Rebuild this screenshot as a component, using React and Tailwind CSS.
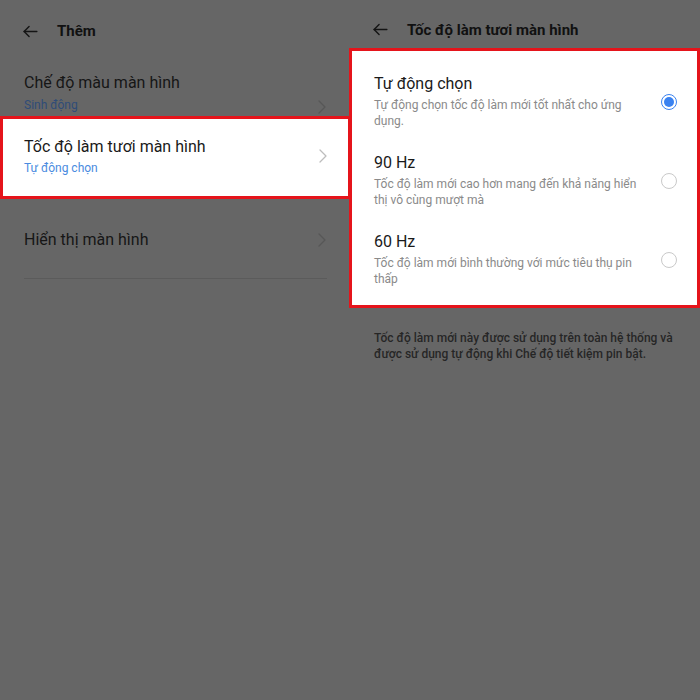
import React from 'react';

const font = { fontFamily: 'Roboto, "Noto Sans", sans-serif' };

function BackArrow() {
  return (
    <svg width="17" height="17" viewBox="0 0 24 24" fill="none" stroke="#141414" strokeWidth="2" strokeLinecap="round" strokeLinejoin="round">
      <path d="M21 12H3" />
      <path d="M10 5l-7 7 7 7" />
    </svg>
  );
}

function Chevron({ color }) {
  return (
    <svg width="8" height="14" viewBox="0 0 8 14" fill="none" stroke={color} strokeWidth="1.3" strokeLinecap="round" strokeLinejoin="round">
      <path d="M1 1l6 6-6 6" />
    </svg>
  );
}

function Radio({ checked }) {
  if (checked) {
    return (
      <div className="w-[16px] h-[16px] rounded-full border-[1.5px] border-[#3a82f0] flex items-center justify-center">
        <div className="w-[10px] h-[10px] rounded-full bg-[#3a82f0]" />
      </div>
    );
  }
  return <div className="w-[16px] h-[16px] rounded-full border border-[#c9c9c9]" />;
}

const options = [
  { title: 'Tự động chọn', desc: 'Tự động chọn tốc độ làm mới tốt nhất cho ứng dụng.', checked: true },
  { title: '90 Hz', desc: 'Tốc độ làm mới cao hơn mang đến khả năng hiển thị vô cùng mượt mà', checked: false },
  { title: '60 Hz', desc: 'Tốc độ làm mới bình thường với mức tiêu thụ pin thấp', checked: false },
];

export default function App() {
  return (
    <div className="w-[700px] h-[700px] bg-[#666666] flex overflow-hidden" style={font}>
      {/* left screen */}
      <div className="w-[350px] flex flex-col">
        <div className="h-[60px] pt-[2px] flex items-center pl-[22px]">
          <BackArrow />
          <span className="ml-[18px] text-[15px] font-bold text-[#111111]">Thêm</span>
        </div>
        <div className="h-[56px] pt-[13px] pl-[24px] pr-[24px] flex items-start justify-between">
          <div>
            <div className="text-[16px] leading-[20px] text-[#161616]">Chế độ màu màn hình</div>
            <div className="mt-[4px] text-[12px] leading-[16px] text-[#2f4c78]">Sinh động</div>
          </div>
          <div className="mt-[27px]"><Chevron color="#575757" /></div>
        </div>
        <div className="h-[83px] w-[351px] bg-white border-[3px] border-[#e5141b] pt-[18px] pl-[21px] pr-[21px] flex items-start justify-between">
          <div>
            <div className="text-[16px] leading-[20px] text-[#1a1a1a]">Tốc độ làm tươi màn hình</div>
            <div className="mt-[3px] text-[12px] leading-[16px] text-[#4a8be0]">Tự động chọn</div>
          </div>
          <div className="mt-[12px]"><Chevron color="#bdbdbd" /></div>
        </div>
        <div className="pt-[31px] pl-[24px] pr-[24px] flex items-center justify-between">
          <div className="text-[16px] leading-[20px] text-[#161616]">Hiển thị màn hình</div>
          <Chevron color="#575757" />
        </div>
        <div className="mt-[28px] ml-[24px] mr-[23px] h-px bg-[#5b5b5b]" />
      </div>

      {/* right screen */}
      <div className="w-[351px] -ml-px flex flex-col">
        <div className="h-[48px] pt-[21px] pl-[23px] flex items-start">
          <BackArrow />
          <span className="ml-[18px] text-[15px] leading-[18px] font-bold text-[#111111]">Tốc độ làm tươi màn hình</span>
        </div>
        <div className="h-[260px] bg-white border-[3px] border-[#e5141b] pt-[23px] pb-[18px] pl-[22px] pr-[20px] flex flex-col gap-[24px]">
          {options.map((o) => (
            <div key={o.title} className="flex items-center justify-between">
              <div className="w-[264px]">
                <div className="text-[16px] leading-[20px] text-[#1a1a1a]">{o.title}</div>
                <div className="mt-[3px] text-[12px] leading-[16px] text-[#8a8a8a]">{o.desc}</div>
              </div>
              <Radio checked={o.checked} />
            </div>
          ))}
        </div>
        <div className="mt-[22px] pl-[25px] pr-[14px] text-[12px] leading-[16px] font-medium text-[#262626]">
          Tốc độ làm mới này được sử dụng trên toàn hệ thống và được sử dụng tự động khi Chế độ tiết kiệm pin bật.
        </div>
      </div>
    </div>
  );
}
